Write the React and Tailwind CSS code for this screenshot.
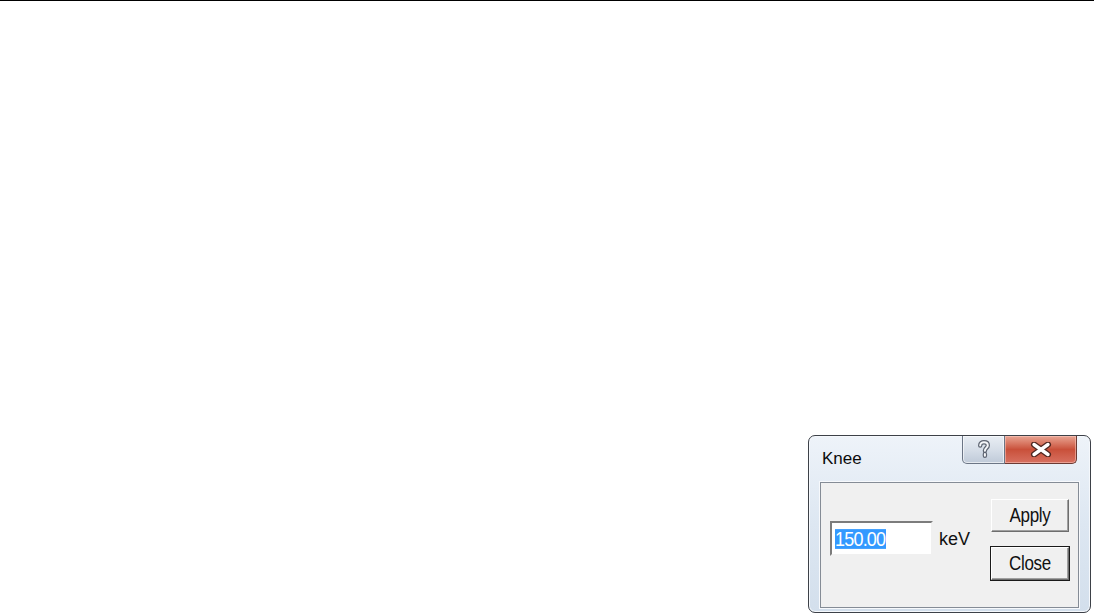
import React from 'react';

const HelpGlyph = () => (
  <svg width="14" height="19" viewBox="0 0 14 19">
    <path
      d="M3.2 5.6 C3.2 3.2 4.9 2.2 7 2.2 C9.3 2.2 10.8 3.4 10.8 5.4 C10.8 7.7 7.9 8.1 7.9 10.7 M7.9 14 L7.9 15.8"
      fill="none"
      stroke="#5d6471"
      strokeWidth="4.4"
      strokeLinecap="round"
    />
    <path
      d="M3.2 5.6 C3.2 3.2 4.9 2.2 7 2.2 C9.3 2.2 10.8 3.4 10.8 5.4 C10.8 7.7 7.9 8.1 7.9 10.7 M7.9 14 L7.9 15.8"
      fill="none"
      stroke="#f4f6f9"
      strokeWidth="2"
      strokeLinecap="round"
    />
  </svg>
);

const CloseGlyph = () => (
  <svg width="22" height="15" viewBox="0 0 22 15">
    <path d="M4 2.5 L18 12.5 M18 2.5 L4 12.5" stroke="#4e2620" strokeWidth="6" strokeLinecap="round" />
    <path d="M4 2.5 L18 12.5 M18 2.5 L4 12.5" stroke="#ffffff" strokeWidth="3.4" strokeLinecap="round" />
  </svg>
);

const WinButton = ({ label, isDefault }) => (
  <div className={isDefault ? 'border border-[#1a1a1a]' : 'border border-transparent'}>
    <div className="w-[78px] h-[33px] flex items-center justify-center bg-[#f0f0f0] border border-t-white border-l-white border-r-[#6e6e6e] border-b-[#6e6e6e] shadow-[inset_-1px_-1px_0_#a0a0a0] text-[#111]">
      <span className="inline-block text-[17px] leading-[18px] tracking-[-0.3px] scale-y-[1.15]">{label}</span>
    </div>
  </div>
);

export default function App() {
  return (
    <div className="w-[1094px] h-[615px] bg-white border-t border-black overflow-hidden font-['Liberation_Sans',Arial,sans-serif]">
      <div className="ml-[808px] mt-[434px] w-[283px] h-[178px] rounded-[7px] border border-[#3d4148] bg-gradient-to-b from-[#eef3f9] via-[#dde7f2] to-[#d3dfec] shadow-[inset_0_0_0_1px_#f5f8fc] flex flex-col">
        {/* Title row */}
        <div className="h-[46px] flex items-start justify-between">
          <div className="pl-[13px] pt-[13px] text-[17px] text-[#0b0b0b] leading-[20px]">Knee</div>
          <div className="flex mr-[13px]">
            <div className="w-[43px] h-[28px] rounded-bl-[5px] border border-t-0 border-[#6b7585] bg-gradient-to-b from-[#e9eef4] via-[#d6dee8] to-[#bfcad8] flex items-center justify-center shadow-[inset_0_0_0_1px_rgba(255,255,255,0.6)]">
              <HelpGlyph />
            </div>
            <div className="w-[72px] h-[28px] rounded-br-[5px] border border-t-0 border-l-0 border-[#6b3a33] bg-gradient-to-b from-[#e8a493] via-[#c9503a] to-[#d77060] flex items-center justify-center shadow-[inset_0_0_0_1px_rgba(255,210,200,0.5)]">
              <CloseGlyph />
            </div>
          </div>
        </div>
        {/* Client area */}
        <div className="mx-[11px] h-[126px] border border-[#858c96] shadow-[0_0_0_1px_#f7f9fc] bg-[#f0f0f0] flex items-start">
          <div className="ml-[9px] mt-[38px] w-[103px] h-[35px] bg-white border-2 border-t-[#7c7c7c] border-l-[#7c7c7c] border-r-[#f0f0f0] border-b-[#f0f0f0] flex items-center pl-[3px]">
            <span className="inline-block bg-[#3399ff] text-white text-[18px] leading-[18px] tracking-[-0.8px] pr-[1px] scale-y-[1.1]">150.00</span>
          </div>
          <div className="ml-[6px] mt-[46px] text-[18px] leading-[20px] text-[#111]">keV</div>
          <div className="ml-auto mr-[8px] mt-[15px] flex flex-col gap-[13px]">
            <WinButton label="Apply" />
            <WinButton label="Close" isDefault />
          </div>
        </div>
      </div>
    </div>
  );
}
